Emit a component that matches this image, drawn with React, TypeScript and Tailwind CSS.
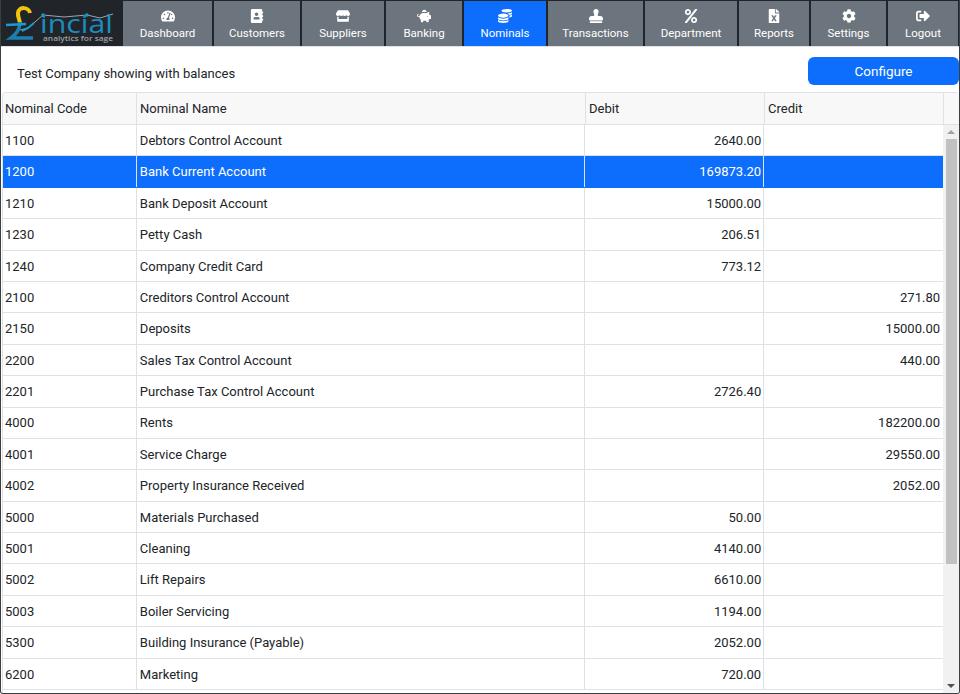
import { FaTachometerAlt, FaAddressBook, FaStore, FaPiggyBank, FaCoins, FaStamp, FaPercent, FaFileExcel, FaCog, FaSignOutAlt } from "react-icons/fa";

const navItems = [
  { label: "Dashboard", icon: FaTachometerAlt, width: "w-[89px]" },
  { label: "Customers", icon: FaAddressBook, width: "w-[86px]" },
  { label: "Suppliers", icon: FaStore, width: "w-[82px]" },
  { label: "Banking", icon: FaPiggyBank, width: "w-[76px]" },
  { label: "Nominals", icon: FaCoins, width: "w-[82px]", active: true },
  { label: "Transactions", icon: FaStamp, width: "w-[95px]" },
  { label: "Department", icon: FaPercent, width: "w-[92px]" },
  { label: "Reports", icon: FaFileExcel, width: "w-[70px]" },
  { label: "Settings", icon: FaCog, width: "w-[75px]" },
  { label: "Logout", icon: FaSignOutAlt, width: "w-[70px]" },
];

const rows = [
  ["1100", "Debtors Control Account", "2640.00", ""],
  ["1200", "Bank Current Account", "169873.20", ""],
  ["1210", "Bank Deposit Account", "15000.00", ""],
  ["1230", "Petty Cash", "206.51", ""],
  ["1240", "Company Credit Card", "773.12", ""],
  ["2100", "Creditors Control Account", "", "271.80"],
  ["2150", "Deposits", "", "15000.00"],
  ["2200", "Sales Tax Control Account", "", "440.00"],
  ["2201", "Purchase Tax Control Account", "2726.40", ""],
  ["4000", "Rents", "", "182200.00"],
  ["4001", "Service Charge", "", "29550.00"],
  ["4002", "Property Insurance Received", "", "2052.00"],
  ["5000", "Materials Purchased", "50.00", ""],
  ["5001", "Cleaning", "4140.00", ""],
  ["5002", "Lift Repairs", "6610.00", ""],
  ["5003", "Boiler Servicing", "1194.00", ""],
  ["5300", "Building Insurance (Payable)", "2052.00", ""],
  ["6200", "Marketing", "720.00", ""],
];

const Logo = () => (
  <svg width="121" height="46" viewBox="0 0 121 46">
    {/* pound mark */}
    <path d="M30 13 C29 7 19 6 18 13 C17.5 17 20 20 20 24" fill="none" stroke="#f2c40f" strokeWidth="4" />
    <path d="M20 22 C20 28 18 33 11 38 L33 38" fill="none" stroke="#1b7fb0" strokeWidth="3.5" />
    <path d="M6 25 L26 24" fill="none" stroke="#1b9ad0" strokeWidth="2.5" />
    <polyline points="20,30 28,28 43,15 64,17 87,15 100,18 113,14" fill="none" stroke="#a0a4a8" strokeWidth="1" />
    <path d="M22 31 L28 28 L34 23" fill="none" stroke="#1b9ad0" strokeWidth="2" />
    <circle cx="43" cy="15" r="1.7" fill="#1b9ad0" />
    <circle cx="87" cy="15" r="1.7" fill="#1b9ad0" />
    <text x="40" y="33" fontSize="26" fontFamily="Open Sans, sans-serif" fill="#1c8cc0" textLength="73" lengthAdjust="spacingAndGlyphs">incial</text>
    <text x="43" y="41" fontSize="7.5" fontWeight="600" fontFamily="Open Sans, sans-serif" fill="#9aa0a6" textLength="70" lengthAdjust="spacingAndGlyphs">analytics for sage</text>
  </svg>
);

const Scrollbar = () => (
  <div className="w-[16px] shrink-0 h-full bg-[#f1f1f1] flex flex-col items-center">
    <div className="h-[14px] flex items-center justify-center shrink-0">
      <div className="w-0 h-0 border-x-[4px] border-x-transparent border-b-[4px] border-b-[#a3a3a3]" />
    </div>
    <div className="w-[11px] h-[425px] bg-[#c1c1c1] shrink-0" />
    <div className="flex-1" />
    <div className="h-[14px] flex items-center justify-center shrink-0">
      <div className="w-0 h-0 border-x-[4px] border-x-transparent border-t-[4px] border-t-[#505050]" />
    </div>
  </div>
);

export default function App() {
  return (
    <div className="w-[960px] h-[694px] overflow-hidden bg-white border-x border-b border-[#3a3f44] flex flex-col text-[13px] text-[#212529] font-['Roboto',sans-serif] rounded-b-[3px]">
      <nav className="h-[47px] -mx-px shrink-0 flex bg-[#212529] gap-[2px] pt-px border-b border-[#dee2e6]">
        <div className="w-[121px] shrink-0 -mt-px"><Logo /></div>
        {navItems.map((item) => (
          <div
            key={item.label}
            className={`${item.width} shrink-0 flex flex-col items-center pt-[8px] text-[11.5px] leading-[16px] text-white ${item.active ? "bg-[#0d6efd]" : "bg-[#6c757d]"}`}
          >
            <item.icon className="w-[14px] h-[14px] mb-[2px]" />
            <span>{item.label}</span>
          </div>
        ))}
      </nav>

      <div className="h-[45px] shrink-0 flex items-center justify-between pl-[16px]">
        <span className="pt-[8px]">Test Company showing with balances</span>
        <button className="w-[151px] h-[28px] mt-[2px] pt-px bg-[#0d6efd] text-white text-[13.5px] rounded-[6px]">Configure</button>
      </div>

      <div className="flex-1 min-h-0 ml-px border-t border-l border-[#dee2e6] rounded-t-[4px] flex flex-col overflow-hidden">
        <div className="flex h-[32px] shrink-0 bg-[#f8f8f8] border-b border-[#dee2e6]">
          <div className="w-[134px] pl-[2px] flex items-center border-r border-[#dee2e6]">Nominal Code</div>
          <div className="w-[449px] px-[3px] flex items-center border-r border-[#dee2e6]">Nominal Name</div>
          <div className="w-[179px] px-[3px] flex items-center border-r border-[#dee2e6]">Debit</div>
          <div className="w-[179px] px-[3px] flex items-center border-r border-[#dee2e6]">Credit</div>
        </div>
        <div className="flex-1 min-h-0 flex justify-between">
          <div className="w-[941px] overflow-hidden">
            {rows.map((row) => {
              const selected = row[0] === "1200";
              return (
                <div
                  key={row[0]}
                  className={`flex h-[31.4px] border-b ${selected ? "bg-[#0d6efd] text-white border-[#0d6efd]" : "border-[#dee2e6]"}`}
                >
                  <div className="w-[134px] pl-[2px] pt-px flex items-center border-r border-[#dee2e6]">{row[0]}</div>
                  <div className="w-[449px] px-[3px] pt-px flex items-center border-r border-[#dee2e6]">{row[1]}</div>
                  <div className="w-[179px] pl-[3px] pr-[2px] pt-px flex items-center justify-end border-r border-[#dee2e6]">{row[2]}</div>
                  <div className="w-[179px] px-[3px] pt-px flex items-center justify-end">{row[3]}</div>
                </div>
              );
            })}
          </div>
          <Scrollbar />
        </div>
      </div>
    </div>
  );
}
